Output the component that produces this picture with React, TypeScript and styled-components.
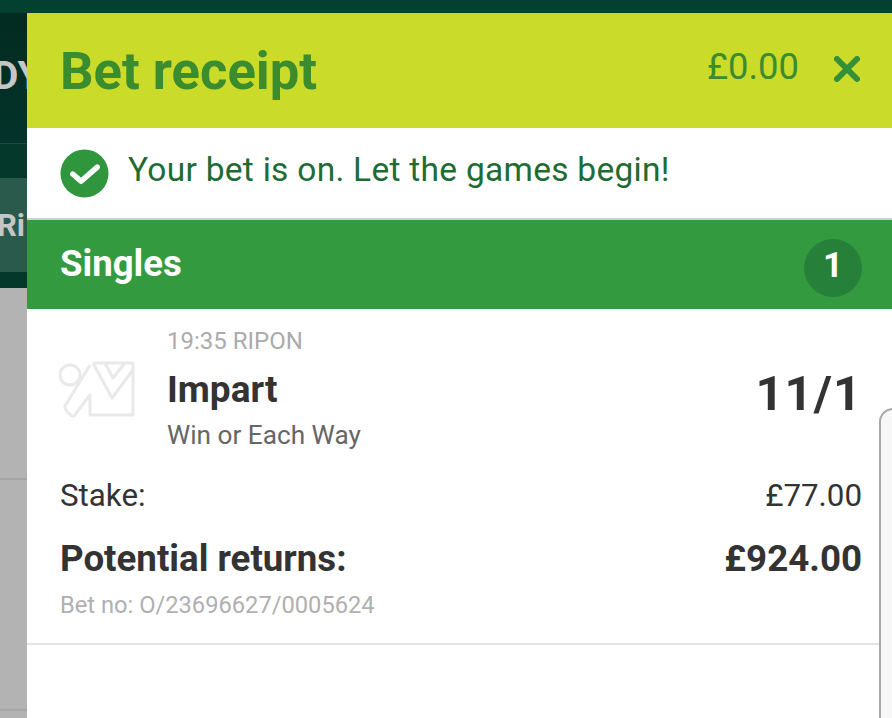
import React from "react";
import styled, { createGlobalStyle } from "styled-components";

const GlobalStyle = createGlobalStyle`
  html, body {
    margin: 0;
    padding: 0;
    background: #fff;
    font-family: Roboto, "Liberation Sans", sans-serif;
  }
`;

function App() {
  return (
    <>
      <GlobalStyle />
      <Screen>
        <TopBar />
        <Main>
          <Backdrop>
            <BrandBand><ClippedLabel size={39} shift={-7}>DY</ClippedLabel></BrandBand>
            <DarkBand />
            <TabBand><ClippedLabel size={31} shift={-3}>Ri</ClippedLabel></TabBand>
            <DarkGap />
            <GreyRow height={192} />
            <GreyRow height={231} />
          </Backdrop>
          <Panel>
            <Header>
              <Title>Bet receipt</Title>
              <HeaderRight>
                <Balance>£0.00</Balance>
                <CloseIcon viewBox="0 0 26 26">
                  <path d="M3 3 L23 23 M23 3 L3 23" />
                </CloseIcon>
              </HeaderRight>
            </Header>
            <Notice>
              <CheckIcon viewBox="0 0 50 50">
                <circle cx="25" cy="25" r="24.5" />
                <path d="M13 25.5 L21.5 33 L38 18.5" />
              </CheckIcon>
              <NoticeText>Your bet is on. Let the games begin!</NoticeText>
            </Notice>
            <SectionBar>
              <SectionTitle>Singles</SectionTitle>
              <CountBadge>1</CountBadge>
            </SectionBar>
            <BetCard>
              <Selection>
                <SilkIcon viewBox="0 0 78 60">
                  <circle cx="11" cy="15" r="10" />
                  <path d="M31 5 L6 46 C5 49 12 57 15 56 L31 35 V55 H74 V3 H34" />
                  <path d="M34 3 L53 38 L74 10" />
                  <path d="M46 3 L54 18 L66 3" />
                </SilkIcon>
                <SelectionInfo>
                  <RaceTime>19:35 RIPON</RaceTime>
                  <Runner>Impart</Runner>
                  <Market>Win or Each Way</Market>
                </SelectionInfo>
                <Odds>11/1</Odds>
              </Selection>
              <StakeRow>
                <span>Stake:</span>
                <span>£77.00</span>
              </StakeRow>
              <ReturnsRow>
                <span>Potential returns:</span>
                <span>£924.00</span>
              </ReturnsRow>
              <BetNumber>Bet no: O/23696627/0005624</BetNumber>
            </BetCard>
          </Panel>
          <PeekCard />
        </Main>
      </Screen>
    </>
  );
}

const Screen = styled.div`
  width: 892px;
  height: 718px;
  overflow: hidden;
  display: flex;
  flex-direction: column;
`;

const TopBar = styled.div`
  height: 13px;
  flex: none;
  background: #03402f;
`;

const Main = styled.div`
  position: relative;
  flex: 1;
  display: flex;
  min-height: 0;
`;

const Backdrop = styled.div`
  width: 27px;
  flex: none;
  display: flex;
  flex-direction: column;
  overflow: hidden;
  background: #b3b3b3;
`;

const BrandBand = styled.div`
  height: 131px;
  flex: none;
  display: flex;
  align-items: center;
  box-sizing: border-box;
  padding-bottom: 5px;
  background: linear-gradient(180deg, #022b20 0%, #03332a 100%);
  border-bottom: 1px solid #1f4a3e;
`;

const DarkBand = styled.div`
  height: 34px;
  flex: none;
  background: #03382a;
`;

const TabBand = styled.div`
  height: 94px;
  flex: none;
  display: flex;
  align-items: center;
  background: #2a5a4b;
`;

const DarkGap = styled.div`
  height: 16px;
  flex: none;
  background: #03382a;
`;

const GreyRow = styled.div<{ height: number }>`
  height: ${({ height }) => height}px;
  flex: none;
  box-sizing: border-box;
  background: #b3b3b3;
  border-bottom: 2px solid #a6a6a6;
`;

const ClippedLabel = styled.span<{ size: number; shift: number }>`
  margin-left: ${({ shift }) => shift}px;
  font-size: ${({ size }) => size}px;
  font-weight: 700;
  color: #c4c7c6;
  white-space: nowrap;
  flex: none;
`;

const Panel = styled.div`
  flex: 1;
  min-width: 0;
  display: flex;
  flex-direction: column;
  background: #fff;
`;

const Header = styled.div`
  height: 115px;
  flex: none;
  box-sizing: border-box;
  padding: 0 32px 0 33px;
  display: flex;
  align-items: flex-start;
  justify-content: space-between;
  background: #cbdb2a;
`;

const Title = styled.h1`
  margin: 25px 0 0;
  font-size: 52.6px;
  line-height: 66px;
  font-weight: 700;
  color: #3a8c2e;
`;

const HeaderRight = styled.div`
  display: flex;
  align-items: center;
  gap: 35px;
  margin-top: 30px;
`;

const Balance = styled.span`
  font-size: 36.4px;
  line-height: 48px;
  color: #3a8c2e;
`;

const CloseIcon = styled.svg`
  width: 26px;
  height: 26px;
  margin-top: 4px;
  fill: none;
  stroke: #339038;
  stroke-width: 6px;
  stroke-linecap: round;
`;

const Notice = styled.div`
  height: 92px;
  flex: none;
  box-sizing: border-box;
  padding: 0 33px 3px;
  display: flex;
  align-items: center;
  gap: 19px;
  border-bottom: 2px solid #cfd2cf;
`;

const CheckIcon = styled.svg`
  width: 49px;
  height: 49px;
  flex: none;
  margin-top: 4px;
  circle {
    fill: #2f963e;
  }
  path {
    fill: none;
    stroke: #fff;
    stroke-width: 5.5px;
    stroke-linecap: round;
    stroke-linejoin: round;
  }
`;

const NoticeText = styled.span`
  font-size: 33.5px;
  line-height: 44px;
  margin-bottom: 4px;
  letter-spacing: 0.28px;
  color: #1f6b34;
`;

const SectionBar = styled.div`
  height: 89px;
  flex: none;
  box-sizing: border-box;
  padding: 0 30px 0 33px;
  display: flex;
  align-items: center;
  justify-content: space-between;
  background: #339a3f;
`;

const SectionTitle = styled.span`
  font-size: 36.6px;
  line-height: 44px;
  font-weight: 700;
  color: #fff;
  margin-bottom: 1px;
`;

const CountBadge = styled.span`
  width: 58px;
  height: 54px;
  padding-bottom: 4px;
  margin-top: 6px;
  display: flex;
  align-items: center;
  justify-content: center;
  border-radius: 50%;
  font-size: 35px;
  font-weight: 700;
  color: #fff;
  background: #27803a;
`;

const BetCard = styled.div`
  box-sizing: border-box;
  height: 336px;
  flex: none;
  padding: 16px 30px 0 33px;
  border-bottom: 2px solid #e4e4e4;
`;

const Selection = styled.div`
  display: flex;
  align-items: center;
  height: 129px;
`;

const SilkIcon = styled.svg`
  width: 78px;
  height: 60px;
  flex: none;
  margin: 0 30px 0 -1px;
  fill: none;
  stroke: #e9e9e9;
  stroke-width: 3px;
  stroke-linejoin: round;
`;

const SelectionInfo = styled.div`
  flex: 1;
  display: flex;
  flex-direction: column;
  margin-bottom: 2px;
`;

const RaceTime = styled.span`
  font-size: 24px;
  line-height: 30px;
  color: #ababab;
`;

const Runner = styled.span`
  font-size: 37px;
  line-height: 46px;
  margin-top: 11px;
  font-weight: 700;
  color: #333;
`;

const Market = styled.span`
  font-size: 26.2px;
  line-height: 34px;
  margin-top: 5px;
  color: #666;
`;

const Odds = styled.span`
  font-size: 49px;
  line-height: 60px;
  font-weight: 700;
  color: #333;
  letter-spacing: 1px;
  margin-top: 8px;
`;

const StakeRow = styled.div`
  display: flex;
  justify-content: space-between;
  margin-top: 22px;
  font-size: 31.3px;
  line-height: 40px;
  color: #333;
`;

const ReturnsRow = styled.div`
  display: flex;
  justify-content: space-between;
  margin-top: 20px;
  font-size: 36.7px;
  line-height: 46px;
  font-weight: 700;
  color: #333;
`;

const BetNumber = styled.div`
  margin-top: 7px;
  font-size: 23.7px;
  line-height: 32px;
  color: #b0b0b0;
`;

const PeekCard = styled.div`
  position: absolute;
  left: 879px;
  top: 395px;
  width: 40px;
  height: 400px;
  box-sizing: border-box;
  background: #f7f7f7;
  border: 2px solid #a9a9a9;
  border-radius: 14px 0 0 0;
`;

export default App;
